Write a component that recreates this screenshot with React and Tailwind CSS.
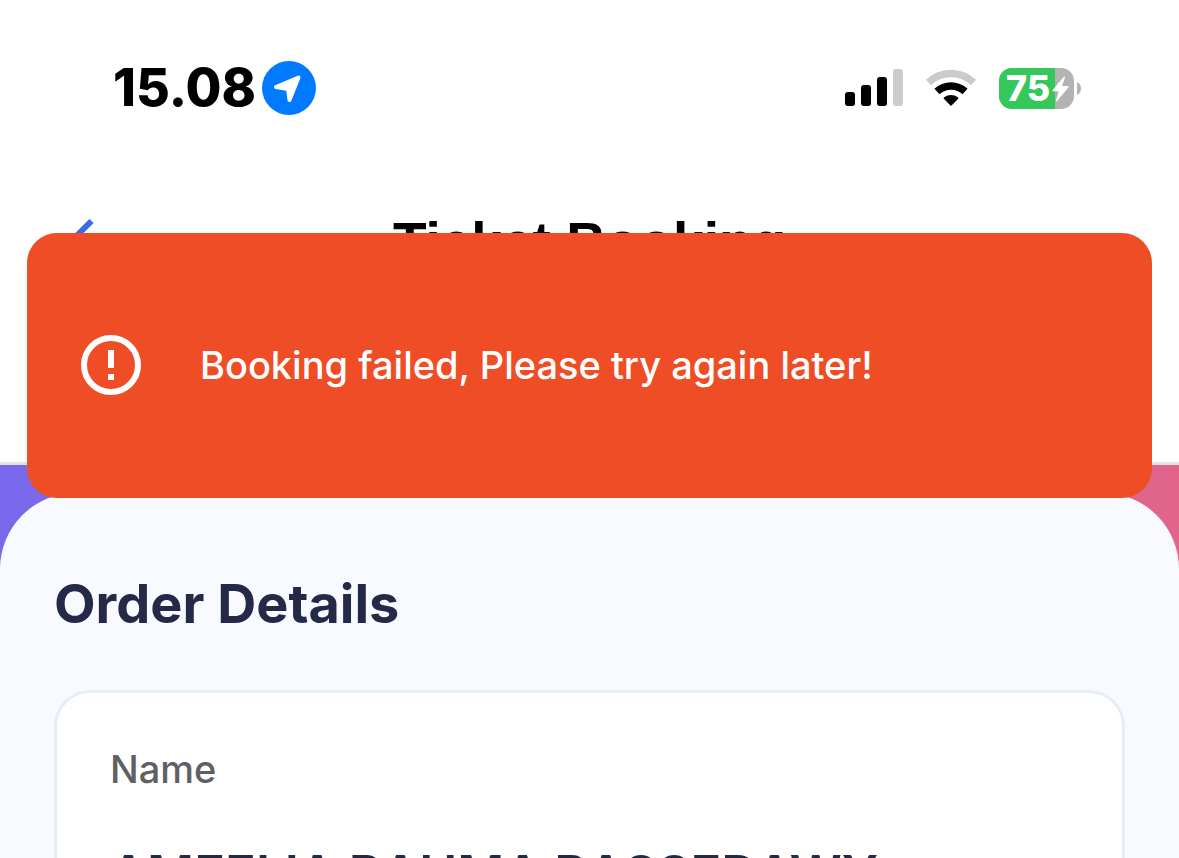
import React from 'react'

function LocationIcon() {
    return (
        <svg className="w-[54px] h-[54px]" viewBox="0 0 54 54" aria-label="Location in use">
            <circle cx="27" cy="27" r="27" fill="#007aff" />
            <path
                d="M14 26 36.500 16.500 27.500 39 26 28Z"
                fill="#fff"
                stroke="#fff"
                strokeWidth="4"
                strokeLinejoin="round"
            />
        </svg>
    )
}

function SignalIcon() {
    return (
        <svg className="w-[58px] h-[38px]" viewBox="0 0 58 38" aria-label="Signal strength">
            <rect x="0" y="23" width="10" height="14" rx="3" />
            <rect x="16" y="16" width="10" height="21" rx="3" />
            <rect x="32" y="8" width="10" height="29" rx="3" />
            <rect x="48" y="0" width="10" height="37" rx="3" fill="#cbcbcb" />
        </svg>
    )
}

function WifiIcon() {
    return (
        <svg className="w-[52px] h-[38px]" viewBox="0 0 52 38" aria-label="Wi-Fi">
            <path d="M3.5 13.5A32.5 32.5 0 0 1 48.5 13.5" fill="none" stroke="#cbcbcb" strokeWidth="7.5" />
            <path d="M12 22.5A20.5 20.5 0 0 1 40 22.5" fill="none" stroke="#000" strokeWidth="7.5" />
            <path d="M26 37 18.8 29.8Q18.3 29 19.2 28.3A11.5 11.5 0 0 1 32.8 28.3Q33.7 29 33.2 29.8Z" />
        </svg>
    )
}

function Battery({ level }) {
    return (
        <div className="flex items-center gap-[3px]">
            <div className="relative flex h-[41px] w-[75px] items-center overflow-hidden rounded-[13px] bg-[#b3b3b3]">
                <div className="absolute inset-y-0 left-0 bg-[#34c759]" style={{ width: `${level}%` }}></div>
                <span className="relative pl-[7px] text-[36px] leading-none font-extrabold text-white">{level}</span>
                <svg className="absolute top-[8px] left-[53px] w-[17px] h-[26px]" viewBox="0 0 17 26" fill="#fff">
                    <path d="M12 0.5 0.5 14.2Q0 15.3 1 15.3H6.8L4 24.3Q4 25.6 5 25L16.6 11.3Q17 10 16 10H10L13 1.5Q13 0 12 0.5Z" />
                </svg>
            </div>
            <svg className="w-[4px] h-[13px]" viewBox="0 0 4 13">
                <path d="M0 0Q4 2 4 6.5T0 13Z" fill="#b3b3b3" />
            </svg>
        </div>
    )
}

function StatusBar() {
    return (
        <div className="flex h-[176px] items-center justify-between pl-[113px] pr-[98px]">
            <div className="flex items-center gap-[6px]">
                <span className="text-[52px] leading-none font-extrabold">15.08</span>
                <LocationIcon />
            </div>
            <div className="flex items-center gap-[22px]">
                <SignalIcon />
                <WifiIcon />
                <Battery level={75} />
            </div>
        </div>
    )
}

function Toast({ message }) {
    return (
        <div
            role="alert"
            className="absolute inset-x-[27px] top-[233px] z-10 flex h-[265px] items-center gap-[59px] rounded-[30px] bg-[#ee4d26] px-[54px] pb-[2px]"
        >
            <svg className="w-[60px] h-[60px] shrink-0" viewBox="0 0 60 60">
                <circle cx="30" cy="30" r="27" fill="none" stroke="#fff" strokeWidth="6" />
                <path d="M27 15h6v18h-6zM27 39h6v6h-6z" fill="#fff" />
            </svg>
            <p className="text-[38px] leading-[48px] font-medium text-white">{message}</p>
        </div>
    )
}

export default function App() {
    return (
        <div className="relative flex h-screen flex-col overflow-hidden bg-white font-['Inter',sans-serif] text-black">
            <Toast message="Booking failed, Please try again later!" />

            <StatusBar />

            {/* Navigation */}
            <header className="grid h-[289px] shrink-0 grid-cols-[1fr_auto_1fr] items-start border-b-[3px] border-[#e2e4ea] px-[66px] pt-[36px]">
                <button type="button" aria-label="Back" className="w-[28px] pt-[6px]">
                    <svg className="w-[28px] h-[50px]" viewBox="0 0 28 50" fill="none">
                        <path d="M25.5 3 3.5 25 25.5 47" stroke="#386be8" strokeWidth="6" />
                    </svg>
                </button>
                <h1 className="font-['Liberation_Sans',sans-serif] text-[55px] leading-[60px] font-bold">Ticket Booking</h1>
            </header>

            {/* Banner behind the sheet */}
            <div className="min-h-0 flex-1 bg-linear-to-r from-[#7868ec] to-[#e2648a] pt-[28px]">
                <main className="h-full rounded-t-[76px] bg-[#f9faff] px-[54px] pt-[81px]">
                    <h2 className="text-[54px] leading-[60px] font-bold text-[#232946]">Order Details</h2>
                    <section className="mt-[56px] rounded-t-[36px] border-[3px] border-b-0 border-[#e7edf8] bg-white px-[53px] pt-[52px]">
                        <dl>
                            <dt className="text-[38px] leading-[48px] font-medium text-[#5f6064]">Name</dt>
                            <dd className="mt-[51px] text-[51px] leading-[60px] font-semibold whitespace-nowrap text-[#232946]">
                                AMEELIA RAHMA RASSEDAWY
                            </dd>
                        </dl>
                    </section>
                </main>
            </div>
        </div>
    )
}
